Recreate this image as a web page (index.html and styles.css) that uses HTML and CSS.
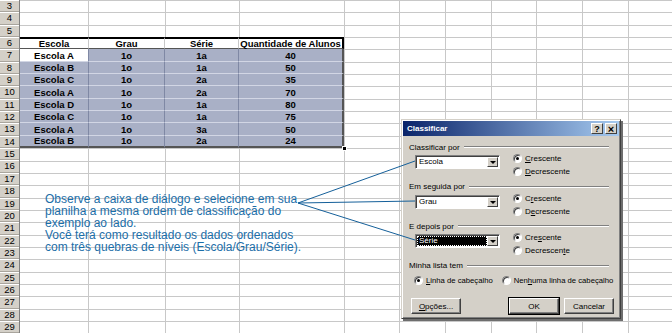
FILE: index.html
```html
<!DOCTYPE html>
<html lang="pt-BR">
<head>
    <meta charset="UTF-8">
    <meta name="viewport" content="width=device-width, initial-scale=1.0">
    <title>Classificar</title>
    <link rel="stylesheet" href="styles.css">
</head>
<body>
    <div class="sheet">
        <div class="rowheads">
            <div>3</div><div>4</div><div>5</div><div>6</div><div>7</div><div>8</div><div>9</div>
            <div>10</div><div>11</div><div>12</div><div>13</div><div>14</div><div>15</div><div>16</div>
            <div>17</div><div>18</div><div>19</div><div>20</div><div>21</div><div>22</div><div>23</div>
            <div>24</div><div>25</div><div>26</div><div>27</div><div>28</div><div>29</div>
        </div>
        <div class="cells">
            <div class="data">
                <div class="hd">Escola</div><div class="hd">Grau</div><div class="hd">Série</div><div class="hd">Quantidade de Alunos</div>
                <div class="active">Escola A</div><div>1o</div><div>1a</div><div>40</div>
                <div>Escola B</div><div>1o</div><div>1a</div><div>50</div>
                <div>Escola C</div><div>1o</div><div>2a</div><div>35</div>
                <div>Escola A</div><div>1o</div><div>2a</div><div>70</div>
                <div>Escola D</div><div>1o</div><div>1a</div><div>80</div>
                <div>Escola C</div><div>1o</div><div>1a</div><div>75</div>
                <div>Escola A</div><div>1o</div><div>3a</div><div>50</div>
                <div>Escola B</div><div>1o</div><div>2a</div><div>24</div>
            </div>
        </div>
    </div>

    <p class="note">
        Observe a caixa de diálogo e selecione em sua<br>
        planilha a mesma ordem de classificação do<br>
        exemplo ao lado.<br>
        Você terá como resultado os dados ordenados<br>
        com três quebras de níveis (Escola/Grau/Série).
    </p>

    <div class="dialog">
        <div class="titlebar">
            <span class="title">Classificar</span>
            <span class="tbtn">?</span>
            <span class="tbtn close">×</span>
        </div>
        <div class="body">
            <div class="group">
                <div class="legend">Classificar por</div>
                <div class="sortrow">
                    <div class="combo"><span>Escola</span><b class="arrow"></b></div>
                    <div class="radios">
                        <div class="radio on"><i></i><u>C</u>rescente</div>
                        <div class="radio"><i></i><u>D</u>ecrescente</div>
                    </div>
                </div>
            </div>
            <div class="group">
                <div class="legend">Em seguida por</div>
                <div class="sortrow">
                    <div class="combo"><span>Grau</span><b class="arrow"></b></div>
                    <div class="radios">
                        <div class="radio on"><i></i>C<u>r</u>escente</div>
                        <div class="radio"><i></i>D<u>e</u>crescente</div>
                    </div>
                </div>
            </div>
            <div class="group">
                <div class="legend">E depois por</div>
                <div class="sortrow">
                    <div class="combo focus"><span>Série</span><b class="arrow"></b></div>
                    <div class="radios">
                        <div class="radio on"><i></i>Cre<u>s</u>cente</div>
                        <div class="radio"><i></i>Decrescen<u>t</u>e</div>
                    </div>
                </div>
            </div>
            <div class="group">
                <div class="legend">Minha lista tem</div>
                <div class="listrow">
                    <div class="radio on"><i></i><u>L</u>inha de cabeçalho</div>
                    <div class="radio"><i></i>Nen<u>h</u>uma linha de cabeçalho</div>
                </div>
            </div>
            <div class="buttons">
                <span class="btn"><u>O</u>pções...</span>
                <span class="btn default">OK</span>
                <span class="btn">Cancelar</span>
            </div>
        </div>
    </div>

    <svg class="callout" width="672" height="333" viewBox="0 0 672 333">
        <path d="M298 203 L415 161 M298 203 L415 201 M298 203 L415 240" fill="none" stroke="#15609a" stroke-width="1"/>
    </svg>
</body>
</html>
```

FILE: styles.css
```css
body {
    margin: 0;
    width: 672px;
    height: 333px;
    overflow: hidden;
    background-color: #fff;
    font-family: "Liberation Sans", Arial, sans-serif;
    position: relative;
}

/* spreadsheet */

.sheet {
    display: flex;
    height: 333px;
}

.rowheads {
    width: 20px;
    display: grid;
    grid-auto-rows: 12.35px;
    border-right: 1px solid #808080;
    box-sizing: border-box;
}

.rowheads div {
    background-color: #d4d0c8;
    border-top: 1px solid #fff;
    border-bottom: 1px solid #a9a59d;
    font-size: 9.5px;
    line-height: 10px;
    text-align: center;
    color: #000;
}

.cells {
    flex: 1;
    background:
        linear-gradient(#c8c8c8, #c8c8c8) 68px 0 / 1px 100% no-repeat,
        linear-gradient(#c8c8c8, #c8c8c8) 145px 0 / 1px 100% no-repeat,
        linear-gradient(#c8c8c8, #c8c8c8) 219px 0 / 1px 100% no-repeat,
        linear-gradient(#c8c8c8, #c8c8c8) 324px 0 / 1px 100% no-repeat,
        linear-gradient(#c8c8c8, #c8c8c8) 379px 0 / 1px 100% no-repeat,
        linear-gradient(#c8c8c8, #c8c8c8) 425px 0 / 1px 100% no-repeat,
        linear-gradient(#c8c8c8, #c8c8c8) 471px 0 / 1px 100% no-repeat,
        linear-gradient(#c8c8c8, #c8c8c8) 516px 0 / 1px 100% no-repeat,
        linear-gradient(#c8c8c8, #c8c8c8) 562px 0 / 1px 100% no-repeat,
        linear-gradient(#c8c8c8, #c8c8c8) 608px 0 / 1px 100% no-repeat,
        repeating-linear-gradient(#c8c8c8 0 1px, #fff 1px 12.35px);
}

.data {
    position: relative;
    display: grid;
    grid-template-columns: 69px 76px 74px 105px;
    grid-auto-rows: 12.35px;
    width: 324px;
    margin-top: 37.05px;
}

.data div {
    display: flex;
    align-items: center;
    justify-content: center;
    box-sizing: border-box;
    background-color: #a9b0c6;
    border-right: 1px solid #7f88a4;
    border-bottom: 1px solid #d2d6e4;
    font-size: 9.5px;
    font-weight: bold;
    color: #000;
}

.data .hd {
    background-color: #fff;
    border-top: 2px solid #000;
    border-right: 1px solid #c8c8c8;
    border-bottom: 1px solid #555;
}

.data .hd:nth-child(4) {
    border-right: 2px solid #000;
}

.data .active {
    background-color: #fff;
}

.data div:nth-child(4n):not(.hd) {
    border-right: 2px solid #555;
}

.data div:nth-last-child(-n+4) {
    border-bottom: 2px solid #555;
}

.data::after {
    content: "";
    position: absolute;
    right: -3px;
    bottom: -3px;
    width: 5px;
    height: 5px;
    background-color: #000;
    border: 1px solid #fff;
    box-sizing: border-box;
}

.note {
    position: absolute;
    left: 45px;
    top: 193px;
    margin: 0;
    font-size: 12px;
    line-height: 12px;
    color: #1b6ea8;
    white-space: nowrap;
}

.callout {
    position: absolute;
    left: 0;
    top: 0;
}

/* sort dialog */

.dialog {
    position: absolute;
    left: 401px;
    top: 119px;
    width: 220px;
    height: 200px;
    box-sizing: border-box;
    padding: 1px;
    background-color: #d4d0c8;
    border: 1px solid;
    border-color: #d4d0c8 #404040 #404040 #d4d0c8;
    box-shadow: inset 1px 1px #fff, inset -1px -1px #808080, 2px 2px 0 #6e6e6e;
    font-size: 8px;
    color: #000;
    white-space: nowrap;
}

.titlebar {
    display: flex;
    align-items: center;
    gap: 2px;
    height: 15px;
    padding: 0 2px 0 4px;
    background: linear-gradient(to right, #0a246a, #a6caf0);
    color: #fff;
    font-weight: bold;
}

.titlebar .title {
    flex: 1;
}

.tbtn {
    width: 12px;
    height: 11px;
    box-sizing: border-box;
    display: flex;
    align-items: center;
    justify-content: center;
    background-color: #d4d0c8;
    border: 1px solid;
    border-color: #fff #404040 #404040 #fff;
    color: #000;
    font-size: 9px;
    font-weight: bold;
}

.tbtn.close {
    font-size: 11px;
}

.body {
    padding: 6px 5px 0 6px;
}

.group {
    margin-bottom: 3.5px;
}

.legend {
    display: flex;
    align-items: center;
    height: 10px;
}

.legend::after {
    content: "";
    flex: 1;
    margin: 0 5px 0 4px;
    border-top: 1px solid #808080;
    border-bottom: 1px solid #fff;
}

.sortrow {
    display: flex;
}

.combo {
    display: flex;
    flex-shrink: 0;
    width: 85px;
    height: 14px;
    margin: 3px 0 0 6px;
    padding: 1px;
    box-sizing: border-box;
    background-color: #fff;
    border: 1px solid;
    border-color: #808080 #fff #fff #808080;
    box-shadow: inset 1px 1px #404040;
}

.combo span {
    flex: 1;
    padding-left: 2px;
    line-height: 10px;
}

.combo.focus span {
    background-color: #000;
    color: #fff;
    outline: 1px dotted #fff;
    outline-offset: -1px;
}

.arrow {
    position: relative;
    width: 11px;
    box-sizing: border-box;
    background-color: #d4d0c8;
    border: 1px solid;
    border-color: #fff #404040 #404040 #fff;
}

.arrow::after {
    content: "";
    position: absolute;
    left: 2px;
    top: 3px;
    border-left: 3px solid transparent;
    border-right: 3px solid transparent;
    border-top: 3px solid #000;
}

.radios {
    margin-left: 13px;
}

.radio {
    display: flex;
    flex-shrink: 0;
    align-items: center;
    height: 13px;
}

.radio i {
    position: relative;
    flex-shrink: 0;
    width: 9px;
    height: 9px;
    margin-right: 3px;
    box-sizing: border-box;
    border-radius: 50%;
    background-color: #fff;
    border: 1px solid;
    border-color: #808080 #fff #fff #808080;
    box-shadow: inset 1px 1px #404040;
}

.radio.on i::after {
    content: "";
    position: absolute;
    left: 2px;
    top: 2px;
    width: 3px;
    height: 3px;
    border-radius: 50%;
    background-color: #000;
}

.listrow {
    display: flex;
    margin-top: 3px;
    padding-left: 5px;
    font-size: 7.7px;
}

.listrow .radio + .radio {
    margin-left: 9px;
}

.buttons {
    display: flex;
    margin-top: 11.5px;
    padding-left: 2px;
}

.btn {
    width: 50px;
    height: 16px;
    box-sizing: border-box;
    display: flex;
    align-items: center;
    justify-content: center;
    background-color: #d4d0c8;
    border: 1px solid;
    border-color: #fff #404040 #404040 #fff;
    box-shadow: inset -1px -1px #808080;
}

.btn.default {
    margin-left: auto;
    margin-right: 5px;
    outline: 1px solid #000;
}
```
